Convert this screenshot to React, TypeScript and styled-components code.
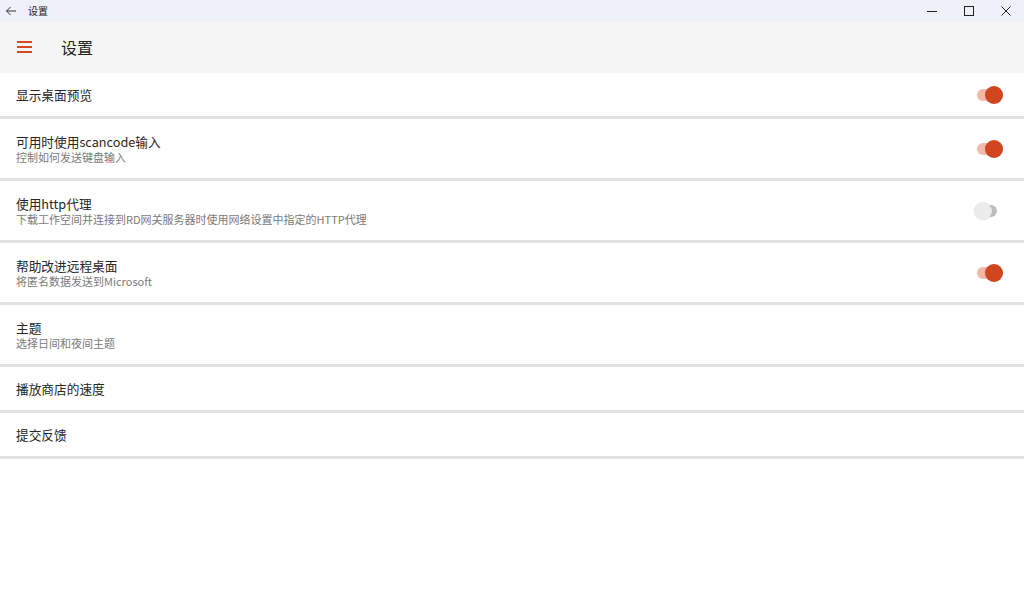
import React from "react";
import styled, { createGlobalStyle } from "styled-components";

const Global = createGlobalStyle`
  html, body { margin: 0; padding: 0; background: #ffffff; }
  body { font-family: "Noto Sans CJK SC", "Noto Sans", sans-serif; }
  * { box-sizing: border-box; }
`;

const Page = styled.div`
  width: 1024px;
  height: 600px;
  display: flex;
  flex-direction: column;
  background: #ffffff;
  overflow: hidden;
`;

const TitleBar = styled.div`
  height: 21px;
  flex: none;
  display: flex;
  align-items: center;
  background: #eef1f8;
  padding-left: 5px;
`;

const TitleText = styled.span`
  font-size: 10px;
  color: #1b1b1b;
  margin-left: 11px;
  line-height: 1;
`;

const WinControls = styled.div`
  margin-left: auto;
  display: flex;
  height: 100%;
`;

const WinButton = styled.div`
  width: 37px;
  height: 100%;
  display: flex;
  align-items: center;
  justify-content: center;
`;

const Header = styled.div`
  height: 52px;
  flex: none;
  display: flex;
  align-items: center;
  background: #f5f5f5;
  padding-left: 17px;
`;

const HeaderTitle = styled.h1`
  margin: 0 0 0 29px;
  font-size: 16px;
  font-weight: 400;
  color: #222;
`;

const List = styled.div`
  display: flex;
  flex-direction: column;
`;

const Row = styled.div<{ $h: number }>`
  height: ${(p) => p.$h}px;
  display: flex;
  align-items: center;
  padding: 0 16px;
  border-bottom: 3px solid #e2e2e2;
`;

const TextCol = styled.div`
  display: flex;
  flex-direction: column;
  flex: 1;
`;

const RowTitle = styled.div`
  font-size: 12.7px;
  color: #262626;
  line-height: 17px;
`;

const RowSub = styled.div`
  font-size: 11px;
  color: #7a7a7a;
  line-height: 14px;
`;

const Track = styled.div<{ $on: boolean }>`
  position: relative;
  width: 20px;
  height: 12px;
  border-radius: 6px;
  margin-right: 11px;
  background: ${(p) => (p.$on ? "#f1b9a9" : "#bdbdbd")};
`;

const Thumb = styled.div<{ $on: boolean }>`
  position: absolute;
  top: -3px;
  left: ${(p) => (p.$on ? "8px" : "-3px")};
  width: 18px;
  height: 18px;
  border-radius: 50%;
  background: ${(p) => (p.$on ? "#d2461f" : "#ececec")};
  box-shadow: 0 0 1px rgba(0, 0, 0, 0.15);
`;

type Item = { title: string; sub?: string; toggle?: boolean };

const items: Item[] = [
  { title: "显示桌面预览", toggle: true },
  { title: "可用时使用scancode输入", sub: "控制如何发送键盘输入", toggle: true },
  {
    title: "使用http代理",
    sub: "下载工作空间并连接到RD网关服务器时使用网络设置中指定的HTTP代理",
    toggle: false,
  },
  { title: "帮助改进远程桌面", sub: "将匿名数据发送到Microsoft", toggle: true },
  { title: "主题", sub: "选择日间和夜间主题" },
  { title: "播放商店的速度" },
  { title: "提交反馈" },
];

export default function App() {
  return (
    <Page>
      <Global />
      <TitleBar>
        <svg width="12" height="12" viewBox="0 0 12 12">
          <path d="M11 6H1.5M5.5 2L1.5 6l4 4" stroke="#333" strokeWidth="1" fill="none" />
        </svg>
        <TitleText>设置</TitleText>
        <WinControls>
          <WinButton>
            <svg width="10" height="10" viewBox="0 0 10 10">
              <path d="M0 5.5h10" stroke="#222" strokeWidth="1" />
            </svg>
          </WinButton>
          <WinButton>
            <svg width="10" height="10" viewBox="0 0 10 10">
              <rect x="0.5" y="0.5" width="9" height="9" stroke="#222" strokeWidth="1" fill="none" />
            </svg>
          </WinButton>
          <WinButton>
            <svg width="10" height="10" viewBox="0 0 10 10">
              <path d="M0.5 0.5l9 9M9.5 0.5l-9 9" stroke="#222" strokeWidth="1" />
            </svg>
          </WinButton>
        </WinControls>
      </TitleBar>
      <Header>
        <svg width="15" height="12" viewBox="0 0 15 12">
          <path d="M0 1h15M0 6h15M0 11h15" stroke="#d4491f" strokeWidth="1.8" />
        </svg>
        <HeaderTitle>设置</HeaderTitle>
      </Header>
      <List>
        {items.map((it) => (
          <Row key={it.title} $h={it.sub ? 62 : 46}>
            <TextCol>
              <RowTitle>{it.title}</RowTitle>
              {it.sub && <RowSub>{it.sub}</RowSub>}
            </TextCol>
            {it.toggle !== undefined && (
              <Track $on={it.toggle}>
                <Thumb $on={it.toggle} />
              </Track>
            )}
          </Row>
        ))}
      </List>
    </Page>
  );
}
